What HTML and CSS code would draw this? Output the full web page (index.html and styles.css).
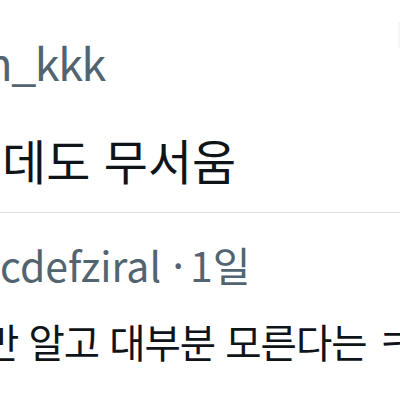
FILE: index.html
```html
<!DOCTYPE html>
<html lang="ko">
<head>
  <meta charset="UTF-8" />
  <meta name="viewport" content="width=device-width, initial-scale=1.0"/>
  <title>Tweet</title>
  <link rel="stylesheet" href="styles.css">
</head>
<body>
  <div class="tweet">
    <div class="tweet-head">
      <div class="handle">m_kkk</div>
      <div class="follow"></div>
    </div>
    <div class="tweet-text">데도 무서움</div>
  </div>

  <div class="reply">
    <div class="reply-meta">cdefziral <span class="dot">·</span>1일</div>
    <div class="reply-text">만 알고 대부분 모른다는 ㅋㅋ</div>
  </div>
</body>
</html>
```

FILE: styles.css
```css
html, body {
  margin: 0;
  padding: 0;
  background: #fff;
  overflow: hidden;
}

body {
  width: 400px;
  height: 400px;
  font-family: "Noto Sans CJK KR", sans-serif;
  color: #0f1419;
}

.tweet {
  padding-top: 34px;
  padding-bottom: 25px;
  border-bottom: 1px solid #dcdfe1;
}

.tweet-head {
  display: flex;
  justify-content: space-between;
  align-items: flex-start;
}

.handle {
  margin-left: -29px;
  font-size: 45px;
  line-height: 56px;
  letter-spacing: -1.5px;
  color: #536471;
  white-space: nowrap;
}

.follow {
  width: 2px;
  height: 26px;
  margin-top: -12px;
  background: #f4f5f6;
}

.tweet-text {
  margin-top: 41px;
  padding-left: 2px;
  font-size: 48px;
  line-height: 56px;
  white-space: nowrap;
}

.reply {
  padding-top: 23px;
}

.reply-meta {
  font-size: 41px;
  line-height: 56px;
  color: #536471;
  white-space: nowrap;
}

.dot {
  margin: 0 6px 0 0;
}

.reply-text {
  margin-top: 21px;
  margin-left: -17px;
  font-size: 39.5px;
  line-height: 56px;
  letter-spacing: -1px;
  white-space: nowrap;
}
```
